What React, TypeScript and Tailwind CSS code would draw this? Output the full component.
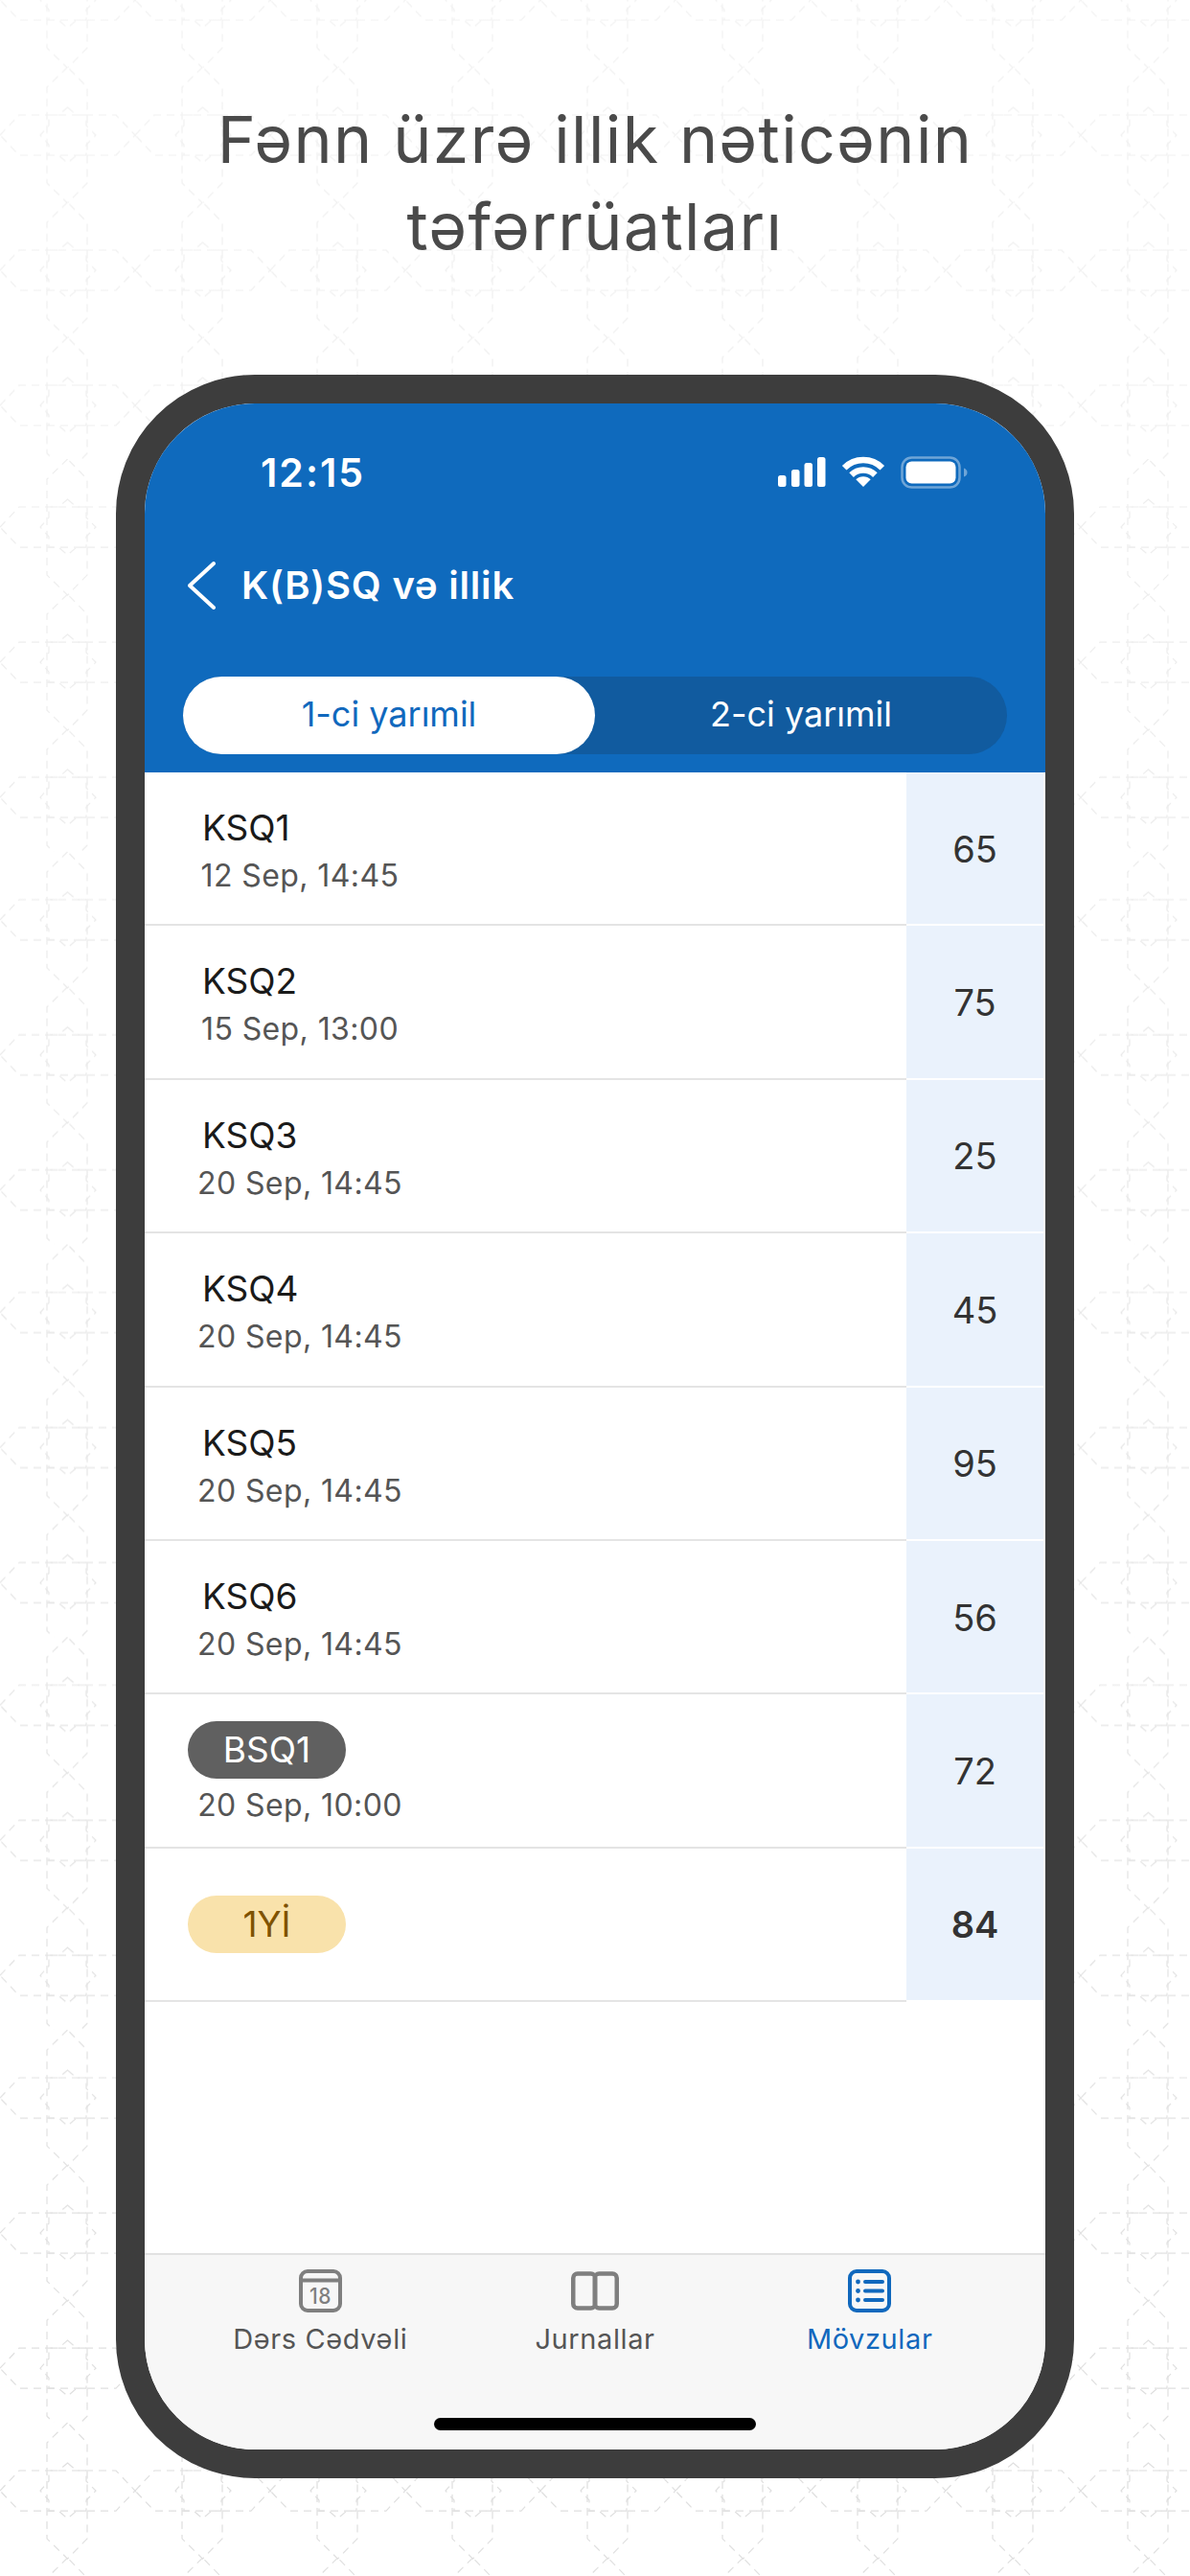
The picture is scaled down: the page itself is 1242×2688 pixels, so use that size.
const rows = [
  { name: 'KSQ1', date: '12 Sep, 14:45', score: '65' },
  { name: 'KSQ2', date: '15 Sep, 13:00', score: '75' },
  { name: 'KSQ3', date: '20 Sep, 14:45', score: '25' },
  { name: 'KSQ4', date: '20 Sep, 14:45', score: '45' },
  { name: 'KSQ5', date: '20 Sep, 14:45', score: '95' },
  { name: 'KSQ6', date: '20 Sep, 14:45', score: '56' },
];

function Cell({ c }: { c: number }) {
  return (
    <g>
      <path d={`M0 ${c}L20 ${c - 21}H121L141 ${c}L121 ${c + 21}H20Z`} />
      <path d={`M70.5 ${c - 71}L49 ${c - 50}V${c + 50}L70.5 ${c + 71}L91 ${c + 50}V${c - 50}Z`} />
      <path
        d={`M70.5 ${c - 29}L80 ${c - 21}H90V${c - 10}L100 ${c}L90 ${c + 10}V${c + 21}H80L70.5 ${c + 29}L61 ${c + 21}H51V${c + 10}L42 ${c}L51 ${c - 10}V${c - 21}H61Z`}
      />
    </g>
  );
}

function Background() {
  return (
    <svg className="absolute inset-0" width="1242" height="2688" fill="none">
      <defs>
        <pattern id="tileTop" patternUnits="userSpaceOnUse" x="0" y="-70.5" width="141" height="141">
          <g stroke="#dedede" strokeWidth="1.2" strokeDasharray="8 6">
            <Cell c={70.5} />
          </g>
        </pattern>
        <pattern id="tile" patternUnits="userSpaceOnUse" x="0" y="479" width="141" height="409.8">
          <g stroke="#dedede" strokeWidth="1.2" strokeDasharray="8 6">
            <Cell c={71} />
            <Cell c={212} />
            <Cell c={353} />
          </g>
        </pattern>
        <linearGradient id="fade" x1="0" y1="0" x2="0" y2="1">
          <stop offset="0" stopColor="#fff" stopOpacity="0.6" />
          <stop offset="1" stopColor="#fff" stopOpacity="0" />
        </linearGradient>
      </defs>
      <rect width="1242" height="479" fill="url(#tileTop)" />
      <rect y="479" width="1242" height="2209" fill="url(#tile)" />
      <rect width="1242" height="2688" fill="url(#fade)" />
    </svg>
  );
}

function StatusIcons() {
  return (
    <svg width="198" height="34" viewBox="0 0 198 34" fill="none">
      <rect x="0" y="20" width="8.5" height="12" rx="2.5" fill="#fff" />
      <rect x="14" y="14" width="8.5" height="18" rx="2.5" fill="#fff" />
      <rect x="27.5" y="7" width="8.5" height="25" rx="2.5" fill="#fff" />
      <rect x="41" y="1" width="8.5" height="31" rx="2.5" fill="#fff" />
      <path d="M69.2 12.2A28 28 0 0 1 108.8 12.2" stroke="#fff" strokeWidth="6.5" />
      <path d="M76.6 19.6A17.5 17.5 0 0 1 101.4 19.6" stroke="#fff" strokeWidth="6.5" />
      <path d="M89 32L81.3 24.3A11 11 0 0 1 96.7 24.3Z" fill="#fff" />
      <rect x="129.5" y="1.5" width="60" height="31" rx="10" stroke="#fff" strokeOpacity="0.4" strokeWidth="2.5" />
      <rect x="133.5" y="5.5" width="52" height="23" rx="6" fill="#fff" />
      <path d="M194 12.5C196.5 13.5 197.5 15 197.5 17S196.5 20.5 194 21.5Z" fill="#fff" fillOpacity="0.4" />
    </svg>
  );
}

function CalendarIcon() {
  return (
    <svg width="45" height="45" viewBox="0 0 45 45" fill="none">
      <rect x="2" y="2" width="41" height="41" rx="7" stroke="#7f7f7f" strokeWidth="4" />
      <path d="M2 11.5H43" stroke="#7f7f7f" strokeWidth="4" />
      <text x="22.5" y="36" textAnchor="middle" fontSize="23" fontWeight="500" fill="#7f7f7f" textLength="23" lengthAdjust="spacingAndGlyphs">
        18
      </text>
    </svg>
  );
}

function BookIcon() {
  return (
    <svg width="50" height="45" viewBox="0 0 50 45" fill="none">
      <rect x="2.25" y="4.5" width="23" height="36" rx="4.5" stroke="#7f7f7f" strokeWidth="4.5" />
      <rect x="24.75" y="4.5" width="23" height="36" rx="4.5" stroke="#7f7f7f" strokeWidth="4.5" />
    </svg>
  );
}

function ListIcon() {
  return (
    <svg width="45" height="45" viewBox="0 0 45 45" fill="none">
      <rect x="2" y="2" width="41" height="41" rx="7" stroke="#1068bd" strokeWidth="4" />
      <circle cx="10.5" cy="13" r="2.4" fill="#1068bd" />
      <circle cx="10.5" cy="22.5" r="2.4" fill="#1068bd" />
      <circle cx="10.5" cy="32" r="2.4" fill="#1068bd" />
      <path d="M18 13H36M18 22.5H36M18 32H36" stroke="#1068bd" strokeWidth="4" strokeLinecap="round" />
    </svg>
  );
}

function Score({ value, bold }: { value: string; bold?: boolean }) {
  return (
    <div
      className={`w-[143px] mr-[2px] pt-[2px] shrink-0 flex items-center justify-center bg-[#eaf2fc] border-b-2 border-white text-[38px] text-[#333333] ${bold ? 'font-semibold' : ''}`}
    >
      {value}
    </div>
  );
}

export default function App() {
  return (
    <div className="relative w-[1242px] h-[2688px] overflow-hidden bg-white font-[family-name:Inter,sans-serif]">
      <Background />
      <div className="relative flex flex-col">
        <h1 className="pt-[100px] text-center text-[68px] leading-[91px] tracking-[1.4px] font-normal text-[#4a4a4a]">
          Fənn üzrə illik nəticənin
          <br />
          təfərrüatları
        </h1>

        <div className="mt-[109px] mx-[121px] h-[2195px] border-[30px] border-[#3d3d3d] rounded-[145px] bg-white overflow-hidden flex flex-col">
          <div className="h-[385px] shrink-0 bg-[#0f6abd] text-white">
            <div className="pt-[47px] pl-[121px] pr-[81px] flex items-center justify-between">
              <span className="text-[41px] leading-[50px] font-semibold tracking-[2px]">12:15</span>
              <StatusIcons />
            </div>
            <div className="mt-[68px] pl-[45px] h-[50px] flex items-center">
              <svg width="30" height="50" viewBox="0 0 30 50" fill="none">
                <path d="M27 2L2 25L27 48" stroke="#fff" strokeWidth="4" strokeLinecap="round" strokeLinejoin="round" />
              </svg>
              <span className="ml-[26px] text-[40px] leading-[50px] font-semibold tracking-[0.8px]">K(B)SQ və illik</span>
            </div>
            <div className="mt-[70px] mx-[40px] h-[81px] rounded-full bg-[#115b9f] grid grid-cols-2 text-center text-[36px] leading-[78px]">
              <div className="rounded-full bg-white text-[#1068bd]">1-ci yarımil</div>
              <div>2-ci yarımil</div>
            </div>
          </div>

          {rows.map((row) => (
            <div key={row.name} className="flex h-[160.4px] shrink-0">
              <div className="flex-1 pl-[45px] pt-[36px] border-b-2 border-[#e4e4e4]">
                <div className="pl-[15px] text-[37px] leading-[44px] text-[#1a1a1a]">{row.name}</div>
                <div className="mt-[8px] w-[234px] text-center text-[32px] leading-[40px] tracking-[0.4px] text-[#555555]">{row.date}</div>
              </div>
              <Score value={row.score} />
            </div>
          ))}

          <div className="flex h-[160.4px] shrink-0">
            <div className="flex-1 pl-[45px] pt-[28px] border-b-2 border-[#e4e4e4]">
              <div className="w-[165px] h-[60px] rounded-full bg-[#606060] text-center text-[37px] leading-[60px] text-white">BSQ1</div>
              <div className="mt-[8px] w-[234px] text-center text-[32px] leading-[40px] tracking-[0.4px] text-[#555555]">20 Sep, 10:00</div>
            </div>
            <Score value="72" />
          </div>

          <div className="flex h-[160.4px] shrink-0">
            <div className="flex-1 pl-[45px] flex items-center border-b-2 border-[#e4e4e4]">
              <div className="w-[165px] h-[60px] rounded-full bg-[#f9e2ab] text-center text-[37px] leading-[60px] text-[#7f5200]">1Yİ</div>
            </div>
            <Score value="84" bold />
          </div>

          <div className="flex-1" />

          <div className="h-[205px] shrink-0 bg-[#f7f7f7] border-t-2 border-[#e2e2e2] flex flex-col">
            <div className="px-[40px] pt-[15px] grid grid-cols-3 text-center text-[29px] leading-[34px] tracking-[0.6px] text-[#555555]">
              <div className="flex flex-col items-center gap-[11px]">
                <CalendarIcon />
                Dərs Cədvəli
              </div>
              <div className="flex flex-col items-center gap-[11px]">
                <BookIcon />
                Jurnallar
              </div>
              <div className="flex flex-col items-center gap-[11px] text-[#1068bd]">
                <ListIcon />
                Mövzular
              </div>
            </div>
            <div className="mt-auto mb-[20px] mx-auto w-[336px] h-[13px] rounded-full bg-black" />
          </div>
        </div>
      </div>
    </div>
  );
}
